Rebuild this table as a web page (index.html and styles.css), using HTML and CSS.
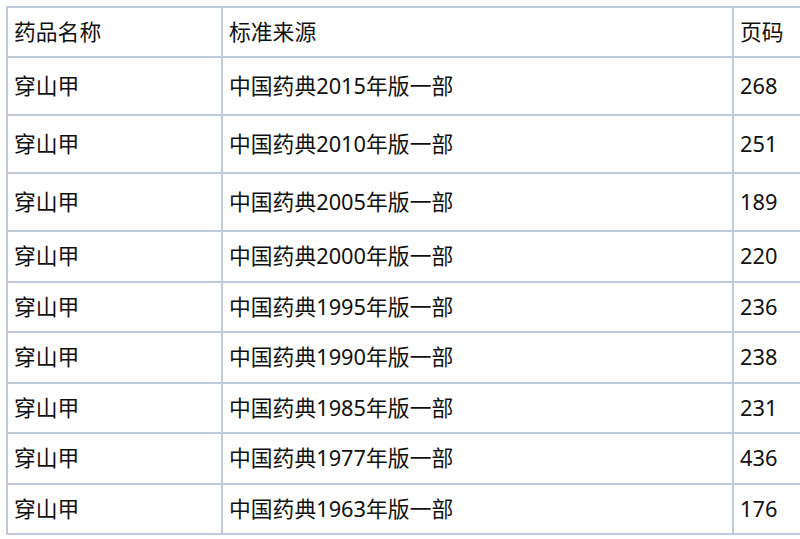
FILE: index.html
```html
<!DOCTYPE html>
<html lang="zh-CN">
<head>
<meta charset="utf-8">
<title>穿山甲 标准来源</title>
<link rel="stylesheet" href="styles.css">
</head>
<body>
<div class="table-wrap">
<table class="drug-table">
  <colgroup>
    <col class="col-name">
    <col class="col-source">
    <col class="col-page">
  </colgroup>
  <thead>
    <tr class="row-head"><th>药品名称</th><th>标准来源</th><th>页码</th></tr>
  </thead>
  <tbody>
    <tr class="row-tall"><td>穿山甲</td><td>中国药典2015年版一部</td><td>268</td></tr>
    <tr class="row-tall"><td>穿山甲</td><td>中国药典2010年版一部</td><td>251</td></tr>
    <tr class="row-tall"><td>穿山甲</td><td>中国药典2005年版一部</td><td>189</td></tr>
    <tr class="row"><td>穿山甲</td><td>中国药典2000年版一部</td><td>220</td></tr>
    <tr class="row"><td>穿山甲</td><td>中国药典1995年版一部</td><td>236</td></tr>
    <tr class="row"><td>穿山甲</td><td>中国药典1990年版一部</td><td>238</td></tr>
    <tr class="row"><td>穿山甲</td><td>中国药典1985年版一部</td><td>231</td></tr>
    <tr class="row"><td>穿山甲</td><td>中国药典1977年版一部</td><td>436</td></tr>
    <tr class="row"><td>穿山甲</td><td>中国药典1963年版一部</td><td>176</td></tr>
  </tbody>
</table>
</div>
</body>
</html>
```

FILE: styles.css
```css
html, body {
  background: #ffffff;
}
body {
  margin: 6px 0 0 6px;
  overflow: hidden;
  font-family: "Noto Sans", "Noto Sans CJK SC", sans-serif;
  font-size: 21.8px;
  color: #111111;
}
.table-wrap {
  width: 794px;
  overflow: hidden;
}
.drug-table {
  border-collapse: collapse;
  table-layout: fixed;
  width: 860px;
}
.col-name { width: 215px; }
.col-source { width: 511px; }
.col-page { width: 134px; }
.drug-table th,
.drug-table td {
  border: 2px solid #bfcadb;
  padding: 0 0 0 6px;
  text-align: left;
  font-weight: normal;
  vertical-align: middle;
  line-height: 1.2;
  white-space: nowrap;
}
.row-head { height: 50px; }
.row-tall { height: 58px; }
.row { height: 50.5px; }
```
